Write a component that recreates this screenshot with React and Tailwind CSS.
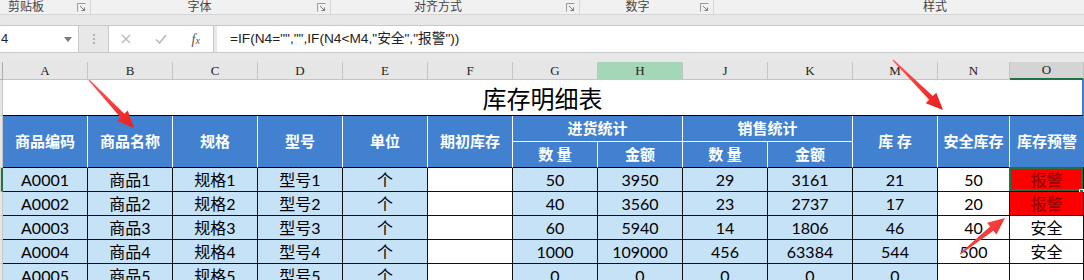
import React from "react";

const cjk = "font-['Lato','Noto_Sans_CJK_SC',sans-serif]";

const letters = ["A", "B", "C", "D", "E", "F", "G", "H", "J", "K", "M", "N", "O"];

const rows = [
  ["A0001", "商品1", "规格1", "型号1", "个", "", "50", "3950", "29", "3161", "21", "50", "报警"],
  ["A0002", "商品2", "规格2", "型号2", "个", "", "40", "3560", "23", "2737", "17", "20", "报警"],
  ["A0003", "商品3", "规格3", "型号3", "个", "", "60", "5940", "14", "1806", "46", "40", "安全"],
  ["A0004", "商品4", "规格4", "型号4", "个", "", "1000", "109000", "456", "63384", "544", "500", "安全"],
  ["A0005", "商品5", "规格5", "型号5", "个", "", "0", "0", "0", "0", "0", "", ""],
];

const Launcher = () => (
  <svg width="9" height="9" viewBox="0 0 9 9" className="shrink-0">
    <path d="M0.5 8.5V0.5H8.5" fill="none" stroke="#9a9a9a" />
    <path d="M3 3L7.5 7.5M7.5 4.5V7.5H4.5" fill="none" stroke="#7a7a7a" />
  </svg>
);

const arrow = (x1, y1, x2, y2) => {
  const len = Math.hypot(x2 - x1, y2 - y1);
  const dx = (x2 - x1) / len;
  const dy = (y2 - y1) / len;
  const nx = -dy;
  const ny = dx;
  const bx = x2 - dx * 17;
  const by = y2 - dy * 17;
  const p = (x, y, w) => `${(x + nx * w).toFixed(1)},${(y + ny * w).toFixed(1)}`;
  return [p(x1, y1, 0.6), p(bx, by, 2.6), p(bx, by, 7.5), `${x2},${y2}`, p(bx, by, -7.5), p(bx, by, -2.6), p(x1, y1, -0.6)].join(" ");
};

function Ribbon() {
  const groups = [
    { label: "剪贴板", w: "w-[91px]", pad: "justify-start pl-[8px]" },
    { label: "字体", w: "w-[240px]", pad: "justify-center pr-[22px]" },
    { label: "对齐方式", w: "w-[249px]", pad: "justify-center pr-[34px]" },
    { label: "数字", w: "w-[134px]", pad: "justify-center pr-[18px]" },
  ];
  return (
    <div className="flex h-[15px] bg-[#f1f1f1] border-b border-[#d6d6d6] text-[12px] leading-[13px] text-[#444] font-['Noto_Sans_CJK_SC',sans-serif]">
      {groups.map((g) => (
        <div key={g.label} className={`${g.w} relative flex items-start border-r border-[#d6d6d6]`}>
          <div className={`flex flex-1 -mt-[1px] ${g.pad}`}>
            <span>{g.label}</span>
          </div>
          <div className="absolute right-[4px] top-[3px]">
            <Launcher />
          </div>
        </div>
      ))}
      <div className="flex-1 flex justify-center -mt-[1px] pl-[72px]">
        <span>样式</span>
      </div>
    </div>
  );
}

function FormulaBar() {
  return (
    <div className="flex flex-col bg-[#e8e8e8]">
      <div className="h-[10px]" />
      <div className="flex h-[28px] items-stretch border-y border-[#c9c9c9] bg-[#fdfdfd]">
        <div className="w-[79px] flex items-center justify-between border-r border-[#c9c9c9] bg-white pl-[1px] pr-[6px] text-[13px] text-[#222] font-['Liberation_Sans',sans-serif]">
          <span>4</span>
          <svg width="8" height="5" viewBox="0 0 8 5">
            <path d="M0 0H8L4 5Z" fill="#7a7a7a" />
          </svg>
        </div>
        <div className="w-[29px] flex flex-col items-center justify-center gap-[2px] bg-[#e8e8e8]">
          <span className="w-[2px] h-[2px] bg-[#b0b0b0]" />
          <span className="w-[2px] h-[2px] bg-[#b0b0b0]" />
          <span className="w-[2px] h-[2px] bg-[#b0b0b0]" />
        </div>
        <div className="w-[106px] flex items-center border-x border-[#c9c9c9] bg-white">
          <div className="w-[35px] flex justify-center">
            <svg width="10" height="10" viewBox="0 0 10 10">
              <path d="M1 1L9 9M9 1L1 9" stroke="#b8b8b8" strokeWidth="1.3" />
            </svg>
          </div>
          <div className="w-[35px] flex justify-center">
            <svg width="12" height="10" viewBox="0 0 12 10">
              <path d="M1 5.5L4.5 9L11 1" fill="none" stroke="#b8b8b8" strokeWidth="1.5" />
            </svg>
          </div>
          <div className="w-[35px] flex justify-center font-['Liberation_Serif',serif] italic text-[14px] text-[#555]">
            f<span className="text-[10px] mt-[4px]">x</span>
          </div>
        </div>
        <div className="w-[3px] bg-[#e8e8e8]" />
        <div className="flex-1 flex items-center pl-[13px] bg-white text-[13.7px] text-[#222] font-['Liberation_Sans','Noto_Sans_CJK_SC',sans-serif]">
          =IF(N4="","",IF(N4&lt;M4,"安全","报警"))
        </div>
      </div>
      <div className="h-[9px]" />
    </div>
  );
}

function Sheet() {
  const head = "bg-[#4181d0] text-white font-bold text-[15px] flex items-center justify-center border-r border-white font-['Noto_Sans_CJK_SC',sans-serif]";
  const rowHead = "bg-[#e6e6e6] border-r border-[#ababab] border-b border-[#c8c8c8]";
  return (
    <div className="grid grid-cols-[3px_repeat(11,85px)_72px_74px] grid-rows-[18px_36px_26px_26px_repeat(5,24px)]">
      {/* column letters */}
      <div className="bg-[#e6e6e6] border-r border-[#ababab] border-b border-[#ababab]" />
      {letters.map((l) => (
        <div
          key={l}
          className={`flex items-center justify-center text-[13px] text-[#222] font-['Liberation_Serif',serif] border-r border-[#c4c4c4] ${
            l === "H"
              ? "bg-[#a3d7b8] border-b border-[#ababab]"
              : l === "O"
              ? "bg-[#d4d4d4] border-b-2 border-b-[#217346]"
              : "bg-[#e6e6e6] border-b border-[#ababab]"
          }`}
        >
          {l}
        </div>
      ))}

      {/* title */}
      <div className={rowHead} />
      <div className="col-span-13 bg-white border-b border-black border-r-2 border-r-[#4181d0] flex items-center justify-center text-[24px] text-black font-['Noto_Sans_CJK_SC',sans-serif]">
        库存明细表
      </div>

      {/* header row 1 */}
      <div className={`${rowHead} row-span-2`} />
      {["商品编码", "商品名称", "规格", "型号", "单位", "期初库存"].map((t) => (
        <div key={t} className={`${head} row-span-2 border-b border-b-black`}>
          {t}
        </div>
      ))}
      <div className={`${head} col-span-2 border-b border-b-white`}>进货统计</div>
      <div className={`${head} col-span-2 border-b border-b-white`}>销售统计</div>
      <div className={`${head} row-span-2 border-b border-b-black`}>库 存</div>
      <div className={`${head} row-span-2 border-b border-b-black`}>安全库存</div>
      <div className={`${head} row-span-2 border-b border-b-black border-r-0`}>库存预警</div>
      {/* header row 2 */}
      {["数 量", "金额", "数 量", "金额"].map((t, i) => (
        <div key={i} className={`${head} border-b border-b-black`}>
          {t}
        </div>
      ))}

      {/* data */}
      {rows.map((r, ri) => (
        <React.Fragment key={ri}>
          <div
            className={
              ri === 0
                ? "bg-[#d2d2d2] border-r-2 border-[#217346] border-b border-b-[#c8c8c8]"
                : rowHead
            }
          />
          {r.map((v, ci) => {
            const white = ci === 5 || ci === 11 || ci === 12;
            const alarm = ci === 12 && v === "报警";
            const bg = alarm ? "bg-[#ff0000] text-[#8a0000]" : white ? "bg-white text-black" : "bg-[#c6e2f7] text-black";
            return (
              <div
                key={ci}
                className={`relative flex items-center justify-center border-r border-b border-[#111] text-[16px] ${cjk} ${bg}`}
              >
                {v}
                {ri === 0 && ci === 12 && (
                  <>
                    <div className="absolute -left-[1px] -top-[1px] right-0 bottom-0 border-2 border-[#217346]" />
                    <div className="absolute -right-[1px] -bottom-[3px] w-[5px] h-[5px] bg-[#217346] border border-white" />
                  </>
                )}
              </div>
            );
          })}
        </React.Fragment>
      ))}
    </div>
  );
}

export default function App() {
  return (
    <div className="relative w-[1084px] h-[280px] overflow-hidden bg-white">
      <Ribbon />
      <FormulaBar />
      <Sheet />
      <svg className="absolute inset-0 pointer-events-none" width="1084" height="280">
        <defs>
          <linearGradient id="red" x1="0" y1="0" x2="1" y2="1">
            <stop offset="0" stopColor="#ff5a5a" />
            <stop offset="1" stopColor="#e81e1e" />
          </linearGradient>
        </defs>
        <polygon points={arrow(89, 80, 134, 128)} fill="url(#red)" />
        <polygon points={arrow(893, 60, 943, 110)} fill="url(#red)" />
        <polygon points={arrow(960, 254, 1005, 218)} fill="url(#red)" />
      </svg>
    </div>
  );
}
